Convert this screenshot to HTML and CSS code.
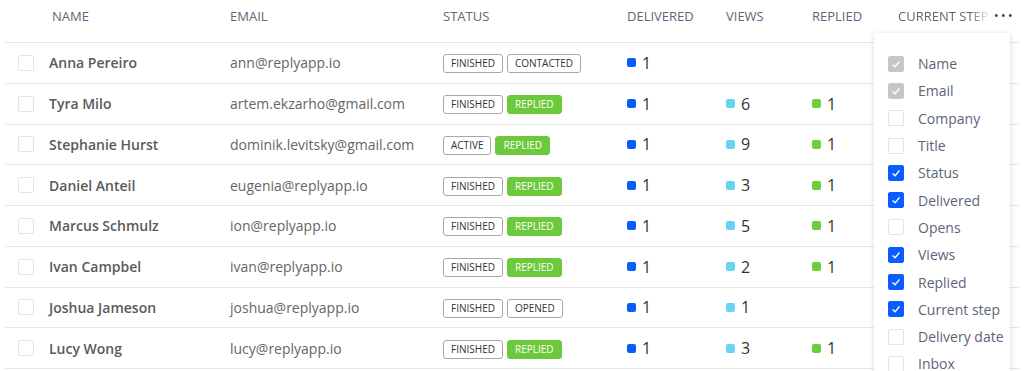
FILE: index.html
```html
<!DOCTYPE html>
<html lang="en">
<head>
  <meta charset="UTF-8">
  <title>Contacts</title>
  <link rel="stylesheet" href="styles.css">
</head>
<body>

  <div class="page">
    <div class="table">
      <div class="row head">
        <div class="cell"></div>
        <div class="cell name-h">Name</div>
        <div class="cell">Email</div>
        <div class="cell">Status</div>
        <div class="cell">Delivered</div>
        <div class="cell">Views</div>
        <div class="cell">Replied</div>
        <div class="cell step-h"><span class="fade">Current step</span><span class="more">&bull;&bull;&bull;</span></div>
      </div>

      <div class="row">
        <div class="cell"><span class="box"></span></div>
        <div class="cell name">Anna Pereiro</div>
        <div class="cell email">ann@replyapp.io</div>
        <div class="cell"><span class="tag">Finished</span><span class="tag">Contacted</span></div>
        <div class="cell num"><i class="dot blue"></i>1</div>
        <div class="cell num"></div>
        <div class="cell num"></div>
        <div class="cell"></div>
      </div>

      <div class="row">
        <div class="cell"><span class="box"></span></div>
        <div class="cell name">Tyra Milo</div>
        <div class="cell email">artem.ekzarho@gmail.com</div>
        <div class="cell"><span class="tag">Finished</span><span class="tag green">Replied</span></div>
        <div class="cell num"><i class="dot blue"></i>1</div>
        <div class="cell num"><i class="dot sky"></i>6</div>
        <div class="cell num"><i class="dot lime"></i>1</div>
        <div class="cell"></div>
      </div>

      <div class="row">
        <div class="cell"><span class="box"></span></div>
        <div class="cell name">Stephanie Hurst</div>
        <div class="cell email">dominik.levitsky@gmail.com</div>
        <div class="cell"><span class="tag">Active</span><span class="tag green">Replied</span></div>
        <div class="cell num"><i class="dot blue"></i>1</div>
        <div class="cell num"><i class="dot sky"></i>9</div>
        <div class="cell num"><i class="dot lime"></i>1</div>
        <div class="cell"></div>
      </div>

      <div class="row">
        <div class="cell"><span class="box"></span></div>
        <div class="cell name">Daniel Anteil</div>
        <div class="cell email">eugenia@replyapp.io</div>
        <div class="cell"><span class="tag">Finished</span><span class="tag green">Replied</span></div>
        <div class="cell num"><i class="dot blue"></i>1</div>
        <div class="cell num"><i class="dot sky"></i>3</div>
        <div class="cell num"><i class="dot lime"></i>1</div>
        <div class="cell"></div>
      </div>

      <div class="row">
        <div class="cell"><span class="box"></span></div>
        <div class="cell name">Marcus Schmulz</div>
        <div class="cell email">ion@replyapp.io</div>
        <div class="cell"><span class="tag">Finished</span><span class="tag green">Replied</span></div>
        <div class="cell num"><i class="dot blue"></i>1</div>
        <div class="cell num"><i class="dot sky"></i>5</div>
        <div class="cell num"><i class="dot lime"></i>1</div>
        <div class="cell"></div>
      </div>

      <div class="row">
        <div class="cell"><span class="box"></span></div>
        <div class="cell name">Ivan Campbel</div>
        <div class="cell email">ivan@replyapp.io</div>
        <div class="cell"><span class="tag">Finished</span><span class="tag green">Replied</span></div>
        <div class="cell num"><i class="dot blue"></i>1</div>
        <div class="cell num"><i class="dot sky"></i>2</div>
        <div class="cell num"><i class="dot lime"></i>1</div>
        <div class="cell"></div>
      </div>

      <div class="row">
        <div class="cell"><span class="box"></span></div>
        <div class="cell name">Joshua Jameson</div>
        <div class="cell email">joshua@replyapp.io</div>
        <div class="cell"><span class="tag">Finished</span><span class="tag">Opened</span></div>
        <div class="cell num"><i class="dot blue"></i>1</div>
        <div class="cell num"><i class="dot sky"></i>1</div>
        <div class="cell num"></div>
        <div class="cell"></div>
      </div>

      <div class="row">
        <div class="cell"><span class="box"></span></div>
        <div class="cell name">Lucy Wong</div>
        <div class="cell email">lucy@replyapp.io</div>
        <div class="cell"><span class="tag">Finished</span><span class="tag green">Replied</span></div>
        <div class="cell num"><i class="dot blue"></i>1</div>
        <div class="cell num"><i class="dot sky"></i>3</div>
        <div class="cell num"><i class="dot lime"></i>1</div>
        <div class="cell"></div>
      </div>
    </div>

    <!-- menu colonne -->
    <div class="menu">
      <label class="opt"><span class="box on gray"><svg viewBox="0 0 16 16"><polyline points="4,8.5 7,11.2 12,5"/></svg></span>Name</label>
      <label class="opt"><span class="box on gray"><svg viewBox="0 0 16 16"><polyline points="4,8.5 7,11.2 12,5"/></svg></span>Email</label>
      <label class="opt"><span class="box"></span>Company</label>
      <label class="opt"><span class="box"></span>Title</label>
      <label class="opt"><span class="box on"><svg viewBox="0 0 16 16"><polyline points="4,8.5 7,11.2 12,5"/></svg></span>Status</label>
      <label class="opt"><span class="box on"><svg viewBox="0 0 16 16"><polyline points="4,8.5 7,11.2 12,5"/></svg></span>Delivered</label>
      <label class="opt"><span class="box"></span>Opens</label>
      <label class="opt"><span class="box on"><svg viewBox="0 0 16 16"><polyline points="4,8.5 7,11.2 12,5"/></svg></span>Views</label>
      <label class="opt"><span class="box on"><svg viewBox="0 0 16 16"><polyline points="4,8.5 7,11.2 12,5"/></svg></span>Replied</label>
      <label class="opt"><span class="box on"><svg viewBox="0 0 16 16"><polyline points="4,8.5 7,11.2 12,5"/></svg></span>Current step</label>
      <label class="opt"><span class="box"></span>Delivery date</label>
      <label class="opt"><span class="box"></span>Inbox</label>
    </div>
  </div>

</body>
</html>
```

FILE: styles.css
```css
body {
  margin: 0;
  font-family: "Open Sans", Arial, sans-serif;
  background: #fff;
  color: #333;
  overflow: hidden;
}
.page {
  position: relative;
  height: 371px;
  overflow: hidden;
}
.table {
  margin-left: 5px;
  width: 1014px;
}
.row {
  display: grid;
  grid-template-columns: 44px 181px 213px 184px 99px 86px 86px 121px;
  height: 39.75px;
  border-bottom: 1px solid #e6e6e6;
}
.row.head {
  height: 42px;
}
.cell {
  display: flex;
  align-items: center;
  white-space: nowrap;
}
.head .cell {
  font-size: 13px;
  text-transform: uppercase;
  color: #5e6678;
  align-items: flex-start;
  padding-top: 7px;
}
.head .name-h {
  padding-left: 3px;
}
.step-h .fade {
  -webkit-mask-image: linear-gradient(to right, #000 72px, transparent 92px);
  mask-image: linear-gradient(to right, #000 72px, transparent 92px);
  width: 92px;
  overflow: hidden;
}
.step-h .more {
  margin-left: 4px;
  font-size: 12px;
  letter-spacing: 2.5px;
  color: #333;
}
.box {
  display: inline-block;
  width: 16px;
  height: 16px;
  box-sizing: border-box;
  border: 1px solid #e3e3e3;
  border-radius: 2px;
  background: #fff;
  margin-left: 13px;
}
.name {
  font-size: 14px;
  font-weight: 600;
  color: #5a5a5a;
}
.email {
  font-size: 14px;
  color: #666;
}
.tag {
  display: inline-block;
  font-size: 10px;
  line-height: 17px;
  padding: 0 7px;
  border: 1px solid #a8a8a8;
  border-radius: 3px;
  text-transform: uppercase;
  color: #333;
  margin-right: 4px;
  margin-top: 2px;
}
.tag.green {
  background: #6cc93c;
  border-color: #6cc93c;
  color: #fff;
}
.num {
  font-size: 16px;
  color: #333;
}
.dot {
  display: inline-block;
  width: 9px;
  height: 9px;
  border-radius: 2px;
  margin-right: 6px;
}
.dot.blue { background: #0a5cff; }
.dot.sky { background: #6ad3f4; }
.dot.lime { background: #6cce3a; }

.menu {
  position: absolute;
  left: 874px;
  top: 33px;
  width: 136px;
  height: 360px;
  background: #fff;
  box-shadow: 0 1px 6px rgba(0, 0, 0, 0.15);
  padding-top: 17px;
  box-sizing: border-box;
}
.opt {
  display: flex;
  align-items: center;
  height: 27.3px;
  font-size: 14px;
  color: #5c6578;
}
.opt .box {
  margin-left: 14px;
  margin-right: 14px;
}
.box.on {
  background: #0a5cff;
  border-color: #0a5cff;
}
.box.on.gray {
  background: #c6c6c6;
  border-color: #c6c6c6;
}
.box svg {
  display: block;
  width: 14px;
  height: 14px;
  fill: none;
  stroke: #fff;
  stroke-width: 1.6;
}
```
